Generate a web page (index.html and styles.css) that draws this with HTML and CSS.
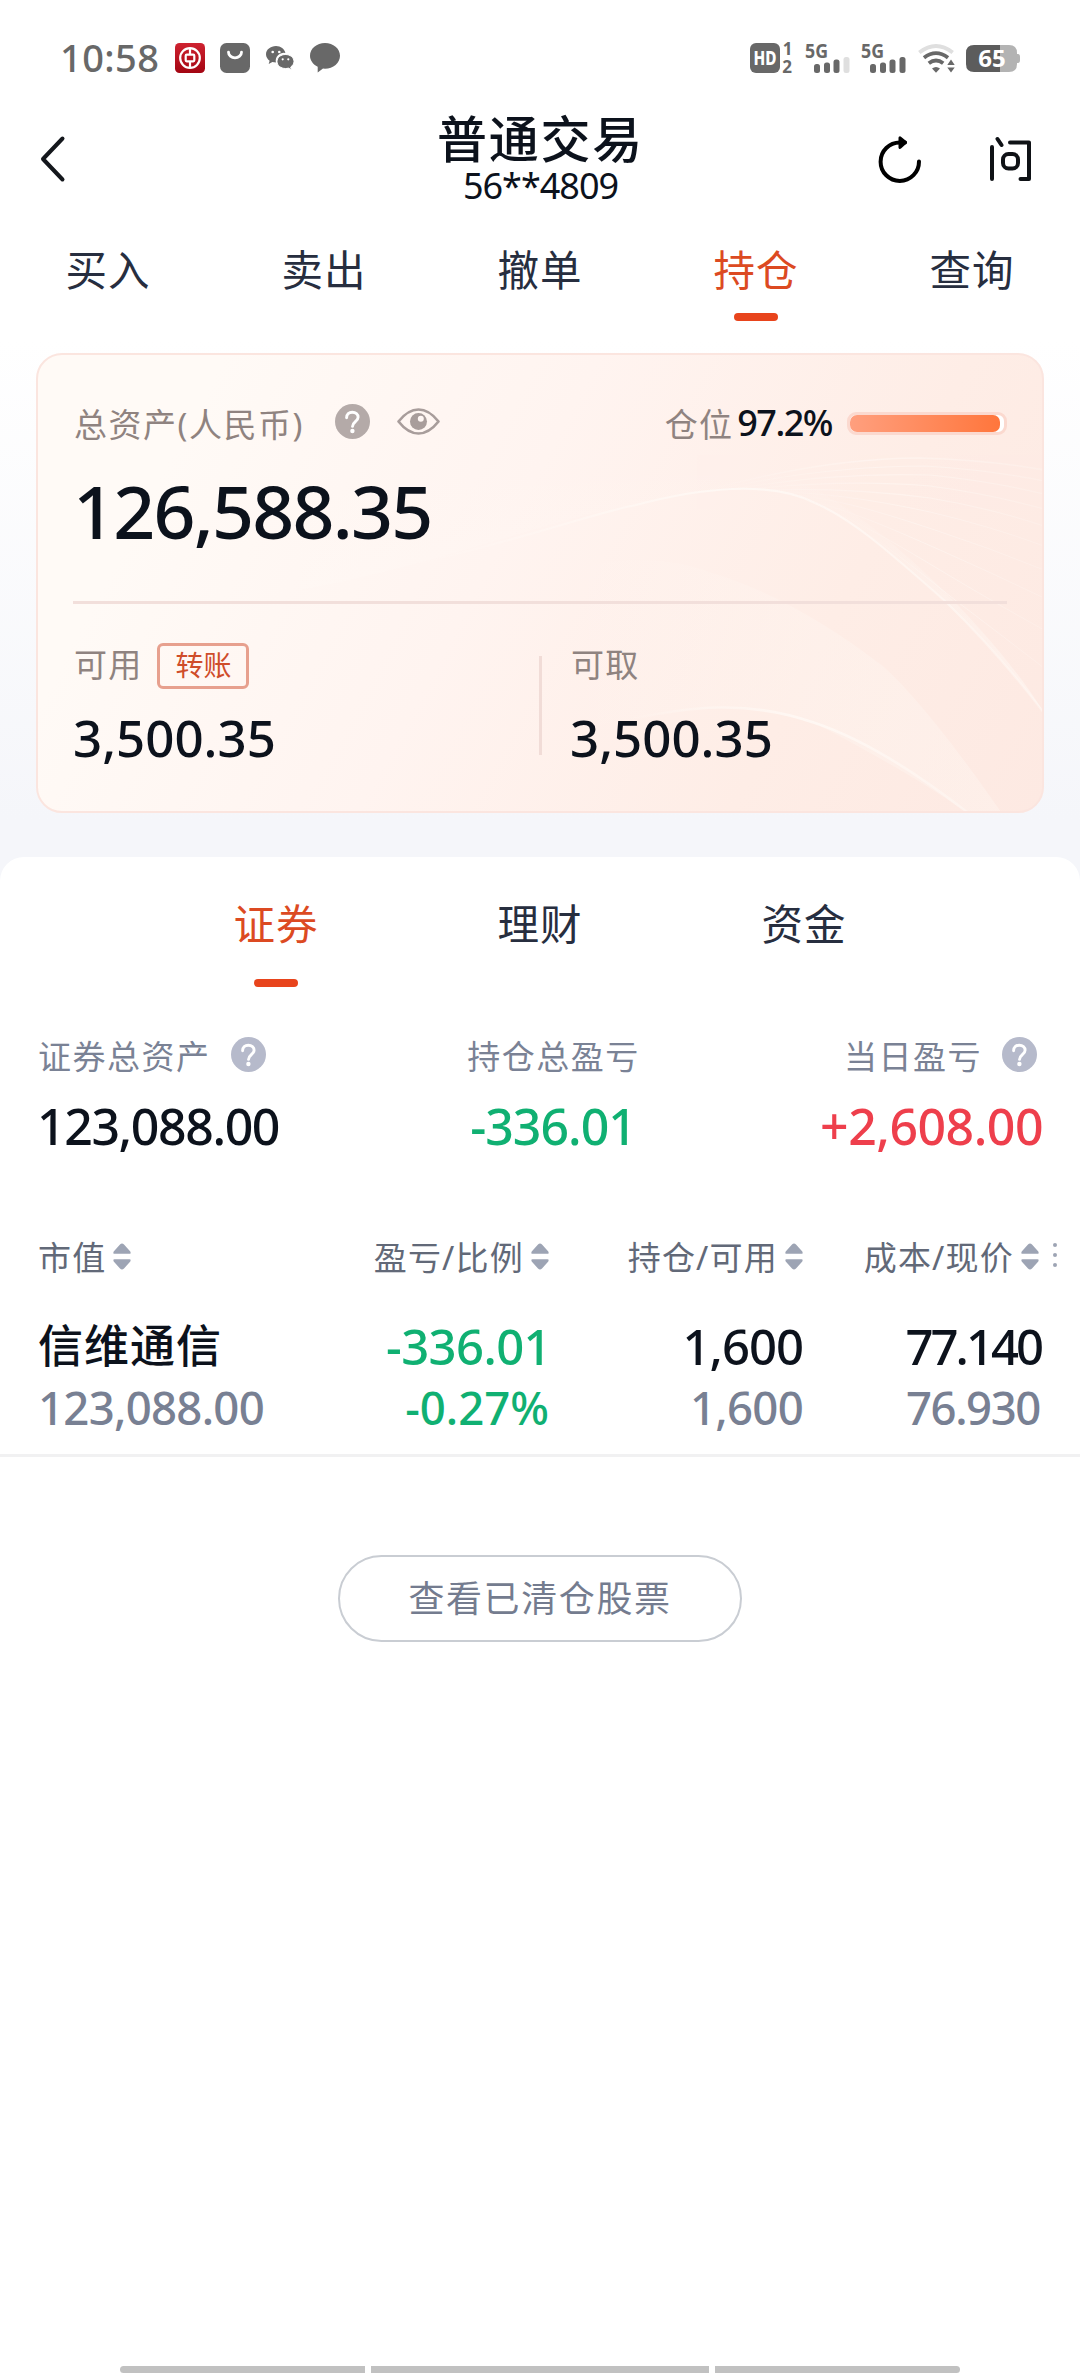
FILE: index.html
```html
<!DOCTYPE html>
<html lang="zh-CN">
<head>
<meta charset="utf-8">
<title>普通交易</title>
<link rel="stylesheet" href="styles.css">
</head>
<body>
<svg width="0" height="0" class="defs">
  <symbol id="help" viewBox="0 0 35 35">
    <circle cx="17.5" cy="17.5" r="17.5" fill="currentColor"/>
    <path d="M11.6 13.8c0-3.6 2.5-5.6 5.7-5.6 3.4 0 5.8 2.1 5.8 5 0 4.300-5.600 4.600-5.600 9.200" fill="none" stroke="#fff" stroke-width="2.900" stroke-linecap="round"/>
    <circle cx="17.400" cy="27" r="2.200" fill="#fff"/>
  </symbol>
  <symbol id="sort" viewBox="0 0 18 27">
    <path d="M9 0.500Q10 0.500 11 1.600L17.300 8.600Q18.300 10.800 16.500 10.800H1.500Q-.3 10.800.7 8.600L7 1.600Q8 .5 9 .5ZM9 26.500Q10 26.500 11 25.400L17.300 18.400Q18.300 16.200 16.500 16.200H1.500Q-.3 16.200.7 18.400L7 25.400Q8 26.500 9 26.500Z" fill="#9da4b4"/>
  </symbol>
</svg>
<div class="page">
  <div class="status">
    <span class="time">10:58</span>
    <div class="status-left">
      <svg width="30" height="30" viewBox="0 0 30 30">
        <defs><linearGradient id="red" x1="0" y1="0" x2="0" y2="1"><stop offset="0" stop-color="#cf2230"/><stop offset="1" stop-color="#a30512"/></linearGradient></defs>
        <rect width="30" height="30" rx="4.500" fill="url(#red)"/>
        <circle cx="15" cy="15" r="9.800" fill="none" stroke="#fff" stroke-width="2.200"/>
        <rect x="10.700" y="11.700" width="8.600" height="6.600" rx="1" fill="none" stroke="#fff" stroke-width="2.200"/>
        <path d="M15 5v6.500M15 18.500V25" stroke="#fff" stroke-width="2.200"/>
      </svg>
      <svg width="30" height="30" viewBox="0 0 30 30">
        <rect width="30" height="30" rx="6.500" fill="#686868"/>
        <path d="M8.500 9.200a6.500 5.600 0 0 0 13 0" fill="none" stroke="#fff" stroke-width="2.800" stroke-linecap="round"/>
      </svg>
      <svg width="30" height="30" viewBox="0 0 30 30">
        <path d="M11 3C5.500 3 1 6.600 1 11.300c0 2.600 1.400 4.900 3.600 6.400L3.700 21l3.700-1.900c1 .3 2.300.5 3.500.5A8 8 0 0 1 20.400 10C19.600 6 15.800 3 11 3Z" fill="#686868"/>
        <path d="M20.500 11.500c-4.700 0-8.500 3.100-8.500 7s3.800 7 8.500 7c1 0 2-.1 2.900-.4l3 1.700-.7-2.800c2-1.300 3.300-3.300 3.300-5.500 0-3.900-3.800-7-8.500-7Z" fill="#686868" stroke="#fff" stroke-width="1"/>
        <g fill="#fff"><circle cx="7.700" cy="9" r="1.300"/><circle cx="14.300" cy="9" r="1.300"/><circle cx="17.700" cy="16.300" r="1.100"/><circle cx="23.300" cy="16.300" r="1.100"/></g>
      </svg>
      <svg width="30" height="30" viewBox="0 0 30 30">
        <path d="M15 0C6.700 0 0 5.600 0 12.800c0 4.500 3 8.600 7.700 11V29.500l5.300-3.900 2 .1c8.300 0 15-5.700 15-12.900S23.300 0 15 0Z" fill="#686868"/>
      </svg>
    </div>
    <div class="status-right">
      <svg width="43" height="30" viewBox="0 0 43 30">
        <rect width="30" height="30" rx="6" fill="#686868"/>
        <text x="15" y="21.800" class="hd" textLength="23" lengthAdjust="spacingAndGlyphs">HD</text>
        <text x="37.500" y="12" class="sim">1</text>
        <text x="37" y="30" class="sim">2</text>
      </svg>
      <svg width="45" height="30" viewBox="0 0 45 30">
        <text x="0" y="14.500" class="net" textLength="23" lengthAdjust="spacingAndGlyphs">5G</text>
        <g fill="#686868"><rect x="9" y="21" width="6" height="9" rx="2.500"/><rect x="19" y="19.500" width="6" height="10.500" rx="2.500"/><rect x="28.500" y="16.500" width="6" height="13.500" rx="2.500"/></g>
        <rect x="38.500" y="14" width="6" height="16" rx="2.500" fill="#dfdfdf"/>
      </svg>
      <svg width="45" height="30" viewBox="0 0 45 30">
        <text x="0" y="14.500" class="net" textLength="23" lengthAdjust="spacingAndGlyphs">5G</text>
        <g fill="#686868"><rect x="9" y="21" width="6" height="9" rx="2.500"/><rect x="19" y="19.500" width="6" height="10.500" rx="2.500"/><rect x="28.500" y="16.500" width="6" height="13.500" rx="2.500"/><rect x="38.500" y="14" width="6" height="16" rx="2.500"/></g>
      </svg>
      <svg width="37" height="30" viewBox="0 0 37 30">
        <g fill="none" stroke-width="3.800">
          <path d="M1.300 9.500Q18 -3.500 34.700 9.500" stroke="#dfdfdf"/>
          <path d="M6 14.800Q18 5.500 30 14.800" stroke="#686868"/>
          <path d="M10.800 20.300Q18 14.600 25.200 20.300" stroke="#686868"/>
        </g>
        <path d="M14 25.500Q18 22.500 22 25.500L18 29.800Z" fill="#686868"/>
        <path d="M33 16.500l3.700 5.500h-7.400ZM33 29.500l3.700-5h-7.400Z" fill="#686868"/>
      </svg>
      <svg width="54" height="27" viewBox="0 0 54 27">
        <path d="M34 0h9q8 0 8 8v1h1q2 0 2 3v3q0 3-2 3h-1v1q0 8-8 8h-9Z" fill="#b3b3b3"/>
        <path d="M34 0H8Q0 0 0 8v11q0 8 8 8h26Z" fill="#5c5c5c"/>
        <text x="26" y="22" class="pct">65</text>
      </svg>
    </div>
  </div>

  <header class="header">
    <svg class="back" width="26" height="46" viewBox="0 0 26 46"><path d="M22.500 2.500L3 23l19.500 20.500" fill="none" stroke="#14171c" stroke-width="4" stroke-linecap="round" stroke-linejoin="round"/></svg>
    <div class="title-box">
      <h1 class="title">普通交易</h1>
      <div class="account">56**4809</div>
    </div>
    <div class="actions">
      <svg width="44" height="48" viewBox="0 0 44 48">
        <path d="M41 26.500A19.200 19.200 0 1 1 22 7.500h5" fill="none" stroke="#000" stroke-width="4" stroke-linecap="round"/>
        <path d="M22 2.800l5.500 4.700-5.500 4.900Z" fill="#000" stroke="#000" stroke-width="3" stroke-linecap="round" stroke-linejoin="round"/>
      </svg>
      <svg width="44" height="48" viewBox="0 0 44 48">
        <path d="M4 12v32M9.500 4l4 6M22 7.500h19v36.500h-8.500" fill="none" stroke="#0f1216" stroke-width="4" stroke-linecap="round" stroke-linejoin="round"/>
        <rect x="15" y="19" width="15" height="14.500" rx="5.500" fill="none" stroke="#0f1216" stroke-width="4"/>
      </svg>
    </div>
  </header>

  <nav class="tabs">
    <div class="tab">买入</div>
    <div class="tab">卖出</div>
    <div class="tab">撤单</div>
    <div class="tab active">持仓</div>
    <div class="tab">查询</div>
  </nav>

  <section class="card">
    <svg class="waves" width="1004" height="456" viewBox="38 355 1004 456">
      <defs>
        <linearGradient id="glow" x1="0" y1="0" x2="0" y2="1"><stop offset="0" stop-color="#fffaf6" stop-opacity="0"/><stop offset="1" stop-color="#fffaf6" stop-opacity=".5"/></linearGradient>
        <linearGradient id="band" gradientUnits="userSpaceOnUse" x1="560" y1="0" x2="1000" y2="0"><stop offset="0" stop-color="#fffaf6" stop-opacity="0"/><stop offset=".6" stop-color="#fffaf6" stop-opacity=".25"/><stop offset="1" stop-color="#fffaf6" stop-opacity=".3"/></linearGradient>
        <linearGradient id="edge" x1="0" y1="0" x2="1" y2="0"><stop offset="0" stop-color="#fffaf6" stop-opacity="0"/><stop offset=".5" stop-color="#fffaf6" stop-opacity=".8"/><stop offset="1" stop-color="#fffaf6" stop-opacity=".4"/></linearGradient>
      </defs>
      <path d="M300 590C440 565 560 515 636 505C700 488 770 480 815 503C850 518 884 547 946 602C985 640 1015 675 1044 713C1000 640 900 540 830 498C780 460 600 440 300 500Z" fill="url(#glow)"/>
      <path d="M400 640C540 560 640 545 712 573C770 590 830 625 884 667C920 700 965 760 1001 812H966C920 780 884 760 815 723C760 700 700 705 600 725Z" fill="url(#band)"/>
      <g fill="none" stroke="url(#edge)">
        <path d="M400 568C540 535 600 511 636 505C700 488 770 480 815 503C850 518 884 547 946 602C985 640 1015 675 1044 713" stroke-width="2.200"/>
        <path d="M620 722C690 705 750 700 815 723C860 738 910 768 967 812" stroke-width="2.600"/>
        <g opacity=".6">
        <path d="M700 492C780 470 850 458 919 458Q990 460 1044 470" stroke-width="1.500"/>
        <path d="M710 491C790 473 860 466 925 466Q990 470 1044 481" stroke-width="1.200"/>
        <path d="M720 491C800 478 860 473 930 475Q990 481 1044 494" stroke-width="1.200"/>
        <path d="M730 491C800 483 870 481 930 486Q990 494 1044 509" stroke-width="1.200"/>
        <path d="M740 491C810 487 870 490 930 498Q990 508 1044 526" stroke-width="1.200"/>
        <path d="M760 491C820 492 870 499 930 512Q990 526 1044 546"/>
        <path d="M780 493C840 499 880 512 935 530Q990 548 1044 570"/>
        <path d="M800 498C850 510 890 528 940 550Q990 572 1044 598"/>
        <path d="M820 506C860 522 900 546 945 573Q990 600 1044 630"/>
        <path d="M845 520C880 540 915 568 955 600Q1000 634 1044 668"/>
        </g>
      </g>
    </svg>
    <div class="card-top">
      <div class="card-top-left">
        <span class="muted">总资产(人民币)</span>
        <svg class="help-warm" width="35" height="35"><use href="#help"/></svg>
        <svg class="eye" width="43" height="27" viewBox="0 0 43 27">
          <path d="M1.500 13.500Q11 1.500 21.500 1.500T41.500 13.500Q32 25.500 21.500 25.500T1.500 13.500Z" fill="none" stroke="#a89d9b" stroke-width="2.700" stroke-linejoin="round"/>
          <circle cx="21.500" cy="13.500" r="8.500" fill="#a89d9b"/><circle cx="23.800" cy="10.700" r="3" fill="#fff7f4"/>
        </svg>
      </div>
      <div class="position">
        <span class="muted">仓位</span><span class="rate">97.2%</span>
        <div class="meter"><div class="meter-fill" style="width:97.2%"></div></div>
      </div>
    </div>
    <div class="total">126,588.35</div>
    <div class="card-rule"></div>
    <div class="funds">
      <div class="fund">
        <div class="fund-label"><span class="muted">可用</span><span class="transfer">转账</span></div>
        <div class="fund-value">3,500.35</div>
      </div>
      <div class="fund-rule"></div>
      <div class="fund">
        <div class="fund-label"><span class="muted">可取</span></div>
        <div class="fund-value">3,500.35</div>
      </div>
    </div>
  </section>

  <main class="sheet">
    <nav class="subtabs">
      <div class="tab active">证券</div>
      <div class="tab">理财</div>
      <div class="tab">资金</div>
    </nav>
    <section class="stats">
      <div class="stat">
        <div class="stat-label">证券总资产<svg width="35" height="35"><use href="#help"/></svg></div>
        <div class="stat-value">123,088.00</div>
      </div>
      <div class="stat center">
        <div class="stat-label">持仓总盈亏</div>
        <div class="stat-value down">-336.01</div>
      </div>
      <div class="stat right">
        <div class="stat-label">当日盈亏<svg width="35" height="35"><use href="#help"/></svg></div>
        <div class="stat-value up">+2,608.00</div>
      </div>
    </section>
    <section class="holdings">
      <div class="row head">
        <div>市值<svg width="18" height="27"><use href="#sort"/></svg></div>
        <div>盈亏/比例<svg width="18" height="27"><use href="#sort"/></svg></div>
        <div>持仓/可用<svg width="18" height="27"><use href="#sort"/></svg></div>
        <div>成本/现价<svg width="18" height="27"><use href="#sort"/></svg></div>
        <svg class="more" width="4" height="24" viewBox="0 0 4 24"><g fill="#9da4b4"><circle cx="2" cy="2" r="2"/><circle cx="2" cy="12" r="2"/><circle cx="2" cy="22" r="2"/></g></svg>
      </div>
      <div class="row main">
        <div class="name">信维通信</div>
        <div class="down">-336.01</div>
        <div>1,600</div>
        <div class="price">77.140</div>
      </div>
      <div class="row sub">
        <div>123,088.00</div>
        <div class="down">-0.27%</div>
        <div>1,600</div>
        <div class="price">76.930</div>
      </div>
    </section>
    <button class="cleared">查看已清仓股票</button>
    <div class="gesture"><i></i><i></i><i></i></div>
  </main>
</div>
</body>
</html>
```

FILE: styles.css
```css
* { box-sizing: border-box; }
body {
  margin: 0;
  background: #fff;
  color: #0c121c;
  font-family: "Noto Sans", "Noto Sans CJK SC", sans-serif;
}
svg { display: block; flex: none; overflow: visible; }
.defs { position: absolute; }
.page {
  width: 1080px;
  height: 2376px;
  display: flex;
  flex-direction: column;
  overflow: hidden;
  background: linear-gradient(#fff 340px, #f5f6fa 820px);
}

/* status bar */
.status {
  height: 112px;
  padding: 4px 60px 0 60px;
  display: flex;
  align-items: center;
  color: #686868;
}
.time { width: 115px; font-size: 38px; font-weight: 500; line-height: 50px; letter-spacing: .4px; margin-top: -2px; }
.status-left { display: flex; gap: 15px; }
.status-right { display: flex; align-items: center; gap: 11.5px; margin-left: auto; }
.status-right text { font-weight: 700; fill: #686868; }
.status-right .hd { font-size: 19px; font-weight: 800; fill: #fff; text-anchor: middle; }
.status-right .sim { font-size: 17px; text-anchor: middle; }
.status-right .net { font-size: 20px; }
.status-right .pct { font-size: 24px; fill: #fff; text-anchor: middle; }

/* title bar */
.header {
  height: 94px;
  padding: 0 48px 0 40px;
  display: grid;
  grid-template-columns: 1fr auto 1fr;
  align-items: center;
}
.title-box { text-align: center; margin-left: 9px; }
.title { margin: 0; font-size: 50px; font-weight: 500; line-height: 53px; letter-spacing: 1.800px; }
.account { font-size: 36px; line-height: 40px; letter-spacing: -1px; }
.actions { display: flex; justify-content: flex-end; gap: 66px; }

/* tabs */
.tabs { height: 147px; padding-top: 34px; display: grid; grid-template-columns: repeat(5, 1fr); }
.tab {
  display: flex;
  flex-direction: column;
  align-items: center;
  font-size: 41.500px;
  line-height: 60px;
  letter-spacing: 1px;
  color: #272e3f;
}
.tab.active { color: #dc4a22; }
.tab.active::after {
  content: "";
  width: 44px;
  height: 8px;
  margin-top: 13px;
  border-radius: 4px;
  background: #e8441c;
}

/* asset card */
.card {
  position: relative;
  height: 460px;
  margin: 0 36px;
  padding: 45px 35px 0;
  border: 2px solid #fbe5df;
  border-radius: 26px;
  overflow: hidden;
  background: linear-gradient(118deg, #fffaf6 15%, #fff4f0 45%, #feede6 75%, #fde9e2);
}
.waves { position: absolute; left: 0; top: 0; }
.card > div { position: relative; }
.muted { font-size: 33px; letter-spacing: 1.200px; color: #8f8380; }
.card-top { height: 46px; display: flex; align-items: center; justify-content: space-between; }
.card-top-left, .position { display: flex; align-items: center; }
.card-top-left .muted { margin-left: 1px; letter-spacing: 1.500px; }
.help-warm { margin: -3px 27px 0 31px; color: #b4aaa8; }
.eye { margin-top: -3px; }
.rate { margin: -1px 15px 0 4px; font-size: 36px; font-weight: 500; line-height: 46px; letter-spacing: -1.500px; }
.meter {
  width: 160px;
  height: 23px;
  border-radius: 9px;
  background: #fff;
  border: 3px solid #fbd9cf;
}
.meter-fill { height: 17px; border-radius: 7px; background: linear-gradient(90deg, #ff9f7e, #ff763c); }
.total { margin-top: 25px; font-size: 73.500px; font-weight: 500; line-height: 80px; letter-spacing: -1.800px; }
.card-rule { height: 3px; margin-top: 50px; background: #f2dfdb; }
.funds { display: flex; }
.fund { flex: none; width: 466px; padding-top: 39px; }
.fund-rule { flex: none; width: 3px; height: 99px; margin: 52px 28px 0 0; background: #f1dcd7; }
.fund-label { height: 46px; display: flex; align-items: center; gap: 15px; padding-left: 1px; }
.fund-label .muted { margin-top: -7px; }
.transfer {
  width: 92px;
  height: 46px;
  border: 3px solid #e7a08e;
  border-radius: 6px;
  font-size: 28px;
  line-height: 39px;
  text-align: center;
  color: #cf4d2a;
}
.fund-value { margin-top: 18px; font-size: 51px; font-weight: 500; line-height: 60px; letter-spacing: 0; }

/* lower sheet */
.sheet {
  flex: 1;
  margin-top: 44px;
  padding-top: 37px;
  border-radius: 24px 24px 0 0;
  background: #fff;
  display: flex;
  flex-direction: column;
}
.subtabs { padding: 0 144px; height: 93px; display: grid; grid-template-columns: repeat(3, 1fr); }
.subtabs .active::after { margin-top: 25px; }
.stats { display: flex; justify-content: space-between; margin-top: 48px; padding: 0 38px; }
.stat-label { height: 40px; display: flex; align-items: center; gap: 20px; font-size: 33px; letter-spacing: 1.500px; color: #7a8295; }
.stat-label svg { color: #b6bacb; margin-top: -1px; }
.stat-value { margin-top: 21px; font-size: 50px; font-weight: 500; line-height: 60px; letter-spacing: -1.400px; margin-left: -1px; }
.center { padding-left: 7px; }
.center .stat-label { justify-content: center; }
.center .stat-value { text-align: center; letter-spacing: -1px; }
.right .stat-label { justify-content: flex-end; padding-right: 5px; }
.right .stat-value { text-align: right; letter-spacing: -.5px; margin-right: -1px; }
.down { color: #10b072; }
.up { color: #ee3f4c; }

/* holdings table */
.holdings { margin-top: 80px; border-bottom: 3px solid #f1f1f2; padding-bottom: 22px; }
.row { padding-left: 38px; display: grid; grid-template-columns: 256px 255px 254px 236px; text-align: right; }
.row > div:first-child { text-align: left; }
.head { position: relative; height: 39px; margin-bottom: 1px; align-items: center; font-size: 33px; line-height: 40px; letter-spacing: 1.200px; color: #626978; }
.head div { display: flex; align-items: center; justify-content: flex-end; gap: 7px; margin-top: 2px; }
.head svg { margin-top: -4px; }
.head div:first-child { justify-content: flex-start; }
.head .more { position: absolute; left: 1053px; top: 7px; margin: 0; }
.main { margin-top: 41px; font-size: 49px; font-weight: 500; line-height: 60px; letter-spacing: -1px; }
.main .name { font-size: 45px; letter-spacing: 1px; }
.main .down { padding-right: 0; margin-right: -2px; letter-spacing: -.6px; }
.main .price { letter-spacing: -3px; margin-right: -2px; }
.sub { margin-top: 7px; font-size: 45.500px; font-weight: 500; line-height: 49px; letter-spacing: -.7px; color: #788093; }
.sub .down { color: #10b072; letter-spacing: 0; }
.sub .price { letter-spacing: -1.400px; margin-right: -1px; }

.cleared {
  width: 404px;
  height: 87px;
  margin: 98px auto 0;
  padding: 0;
  border: 2px solid #c9cdd3;
  border-radius: 44px;
  background: #fff;
  font: 400 36px/82px "Noto Sans", "Noto Sans CJK SC", sans-serif;
  letter-spacing: 1.600px;
  color: #747c8f;
}
.gesture { display: flex; gap: 6px; margin: auto auto 3px; }
.gesture i { width: 245px; height: 7px; background: #c1c1c1; }
.gesture i:nth-child(2) { width: 338px; }
.gesture i:first-child { border-radius: 4px 0 0 4px; }
.gesture i:last-child { border-radius: 0 4px 4px 0; }
```
